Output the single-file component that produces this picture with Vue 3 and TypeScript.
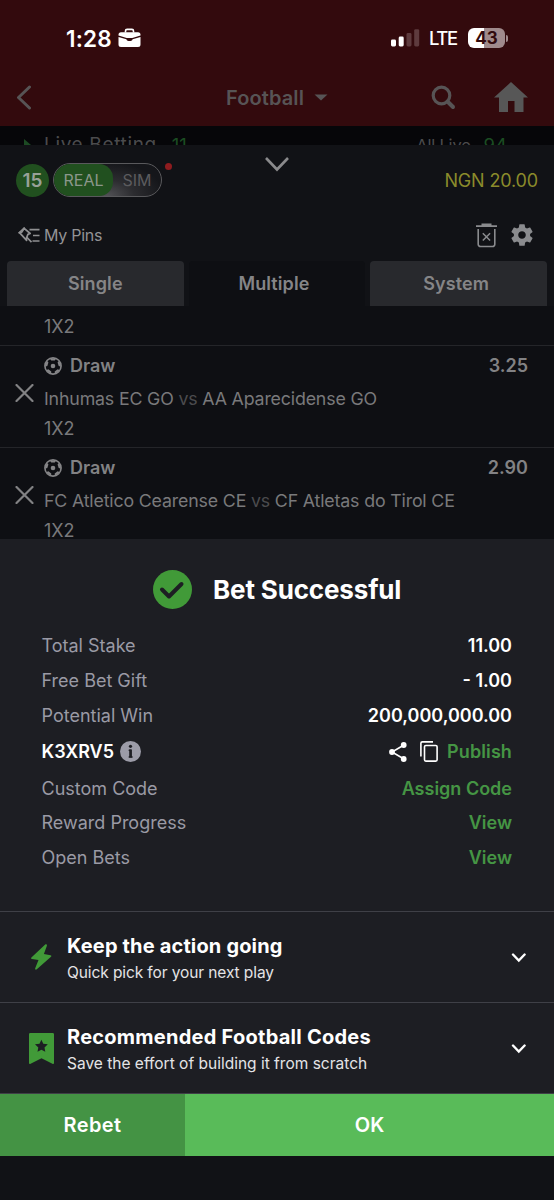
<script setup lang="ts">
interface Pick {
  outcome: string
  odds: string
  home: string
  away: string
  market: string
}

interface Detail {
  label: string
  value: string
  kind: 'amount' | 'code' | 'link'
}

const picks: Pick[] = [
  { outcome: 'Draw', odds: '3.25', home: 'Inhumas EC GO', away: 'AA Aparecidense GO', market: '1X2' },
  { outcome: 'Draw', odds: '2.90', home: 'FC Atletico Cearense CE', away: 'CF Atletas do Tirol CE', market: '1X2' },
]

const details: Detail[] = [
  { label: 'Total Stake', value: '11.00', kind: 'amount' },
  { label: 'Free Bet Gift', value: '- 1.00', kind: 'amount' },
  { label: 'Potential Win', value: '200,000,000.00', kind: 'amount' },
  { label: 'K3XRV5', value: 'Publish', kind: 'code' },
  { label: 'Custom Code', value: 'Assign Code', kind: 'link' },
  { label: 'Reward Progress', value: 'View', kind: 'link' },
  { label: 'Open Bets', value: 'View', kind: 'link' },
]

// Angles of the outer panels on the football icon.
const ballPanels: number[] = [0, 72, 144, 216, 288]
</script>

<template>
  <div class="screen">
    <header class="top">
      <div class="status">
        <span class="time">1:28</span>
        <svg class="case" width="23" height="20" viewBox="0 0 23 20">
          <path d="M7.500 4.500V3a1.600 1.600 0 0 1 1.600-1.600h4.800A1.600 1.600 0 0 1 15.500 3v1.500" fill="none" stroke="#fff" stroke-width="1.600" />
          <path d="M3 4.200h17a2.500 2.500 0 0 1 2.500 2.500v.9L14.300 10H8.700L.5 7.600V6.700A2.500 2.500 0 0 1 3 4.200z" fill="#fff" />
          <path d="M.5 8.900l7.900 2.400c.3 1.300 1.100 1.700 2 1.700h2.200c.9 0 1.700-.4 2-1.700l7.900-2.400v7.600a2.500 2.500 0 0 1-2.500 2.500H3a2.500 2.500 0 0 1-2.500-2.500z" fill="#fff" />
        </svg>
        <span class="grow"></span>
        <svg class="signal" width="29" height="18" viewBox="0 0 29 18">
          <rect x="0" y="10.500" width="5" height="7" rx="1.400" fill="#fff" />
          <rect x="7.700" y="7.500" width="5" height="10" rx="1.400" fill="#fff" />
          <rect x="15.500" y="4" width="5" height="13.500" rx="1.400" fill="#5e3b3e" />
          <rect x="23.200" y="0.200" width="5" height="17.300" rx="1.400" fill="#5e3b3e" />
        </svg>
        <span class="lte">LTE</span>
        <span class="battery">43</span>
        <span class="nub"></span>
      </div>
      <nav class="nav">
        <svg class="back" width="16" height="26" viewBox="0 0 16 26">
          <path d="M13.500 2L2.500 12.500l11 10.500" fill="none" stroke="#575455" stroke-width="3" stroke-linecap="round" stroke-linejoin="round" />
        </svg>
        <span class="sport">Football</span>
        <svg class="caret" width="14" height="7" viewBox="0 0 14 7"><path d="M.5.500h13L7 6.500z" fill="#575455" /></svg>
        <span class="grow"></span>
        <svg width="26" height="26" viewBox="0 0 26 26">
          <circle cx="10.500" cy="10.500" r="8.300" fill="none" stroke="#575455" stroke-width="3.200" />
          <path d="M16.500 16.500l5.500 5.500" stroke="#575455" stroke-width="4" stroke-linecap="round" />
        </svg>
        <svg class="home" width="34" height="30" viewBox="0 0 34 30">
          <path d="M17 0l17 15.500h-4.500V30h-9V19h-6.500v11H5V15.500H0z" fill="#575757" />
        </svg>
      </nav>
    </header>

    <div class="strip">
      <svg class="play" width="7" height="12" viewBox="0 0 7 12"><path d="M0 0l7 6-7 6z" fill="#1c4a23" /></svg>
      <span class="live">Live Betting</span>
      <span class="count">11</span>
      <span class="grow"></span>
      <span class="all">All Live</span>
      <span class="count right">94</span>
    </div>

    <section class="slip">
      <div class="account">
        <span class="badge">15</span>
        <div class="toggle">
          <span class="real">REAL</span>
          <span class="sim">SIM</span>
        </div>
        <span class="dot"></span>
        <svg class="collapse" width="26" height="16" viewBox="0 0 26 16">
          <path d="M2 2l11 11.500L24 2" fill="none" stroke="#8a8a8c" stroke-width="2.600" />
        </svg>
        <span class="grow"></span>
        <span class="balance">NGN 20.00</span>
      </div>

      <div class="pins">
        <svg width="22" height="17" viewBox="0 0 22 17">
          <path d="M6.200 1.300l6 5.200-2.300.9-1.400 3.600.1 2.300L1.500 5.600l2.300-.5z" fill="none" stroke="#8f8f91" stroke-width="1.700" stroke-linejoin="round" />
          <path d="M.6 6.300L6.700.6M8.500 10l5 5.200M11.500 2.700h10M15 8.500h6.500M14.500 14h7" fill="none" stroke="#8f8f91" stroke-width="1.700" />
        </svg>
        <span class="pins-label">My Pins</span>
        <span class="grow"></span>
        <svg width="21" height="25" viewBox="0 0 21 25">
          <path d="M0 3.100h21M5.500 1.500h10" stroke="#8a8b8e" stroke-width="1.800" />
          <path d="M2.200 6v15.200a2.300 2.300 0 0 0 2.300 2.300h12a2.300 2.300 0 0 0 2.300-2.300V6" fill="none" stroke="#8a8b8e" stroke-width="1.600" />
          <path d="M6.800 10.200l7.300 7.300m0-7.300l-7.300 7.300" stroke="#8a8b8e" stroke-width="1.500" />
        </svg>
        <svg class="gear" width="26" height="26" viewBox="0 0 24 24">
          <path fill="#8a8b8e" d="M19.430 12.980c.04-.32.07-.64.07-.98s-.03-.66-.07-.98l2.110-1.650c.19-.15.24-.42.12-.64l-2-3.460c-.12-.22-.39-.3-.61-.22l-2.490 1c-.52-.4-1.080-.73-1.690-.98l-.38-2.650C14.460 2.180 14.250 2 14 2h-4c-.25 0-.46.180-.49.420l-.38 2.650c-.61.25-1.170.59-1.690.98l-2.490-1c-.23-.09-.49 0-.61.220l-2 3.460c-.13.22-.07.49.12.640l2.110 1.650c-.04.32-.07.65-.07.98s.03.66.07.98l-2.110 1.650c-.19.15-.24.42-.12.640l2 3.460c.12.220.39.300.61.220l2.490-1c.52.400 1.080.730 1.690.980l.38 2.650c.03.240.24.420.49.420h4c.25 0 .46-.18.49-.42l.38-2.650c.61-.25 1.170-.59 1.690-.98l2.490 1c.23.090.49 0 .61-.22l2-3.460c.12-.22.07-.49-.12-.64l-2.110-1.650zM12 15.500c-1.930 0-3.500-1.570-3.500-3.500s1.570-3.500 3.500-3.500 3.500 1.570 3.500 3.500-1.570 3.500-3.500 3.500z" />
        </svg>
      </div>

      <div class="tabs">
        <span class="tab">Single</span>
        <span class="tab current">Multiple</span>
        <span class="tab shifted">System</span>
      </div>

      <div class="picks">
        <div class="tail">1X2</div>
        <article v-for="pick in picks" :key="pick.home" class="pick">
          <svg class="remove" width="19" height="18" viewBox="0 0 19 18">
            <path d="M1.500 1l16 16M17.500 1l-16 16" stroke="#828284" stroke-width="2.200" stroke-linecap="round" />
          </svg>
          <div class="pick-body">
            <div class="pick-head">
              <svg width="18" height="18" viewBox="0 0 18 18">
                <circle cx="9" cy="9" r="8.100" fill="none" stroke="#858587" stroke-width="1.600" />
                <circle cx="9" cy="9" r="2.300" fill="#858587" />
                <path v-for="angle in ballPanels" :key="angle" :transform="`rotate(${angle} 9 9)`" d="M5.800 1.400h6.400L10.800 3.600H7.200z" fill="#858587" />
              </svg>
              <span class="outcome">{{ pick.outcome }}</span>
              <span class="grow"></span>
              <span class="odds">{{ pick.odds }}</span>
            </div>
            <div class="teams">{{ pick.home }} <span class="vs">vs</span> {{ pick.away }}</div>
            <div class="market">{{ pick.market }}</div>
          </div>
        </article>
      </div>
    </section>

    <section class="result">
      <div class="result-title">
        <svg width="39" height="39" viewBox="0 0 39 39">
          <circle cx="19.500" cy="19.500" r="19.500" fill="#419a38" />
          <path d="M9 19.500l7 7L28.500 14" fill="none" stroke="#1d1e23" stroke-width="4" stroke-linecap="round" stroke-linejoin="round" />
        </svg>
        <h1>Bet Successful</h1>
      </div>

      <div class="details">
        <div v-for="row in details" :key="row.label" class="detail" :class="row.kind">
          <span class="label">{{ row.label }}</span>
          <svg v-if="row.kind === 'code'" class="info" width="21" height="21" viewBox="0 0 21 21">
            <circle cx="10.500" cy="10.500" r="10.500" fill="#9c9ca8" />
            <path d="M9.300 9.200h1.200v6.600M9.300 16h2.700" fill="none" stroke="#1d1e23" stroke-width="1.600" stroke-linecap="round" />
            <path d="M10.600 8.500v8" stroke="#1d1e23" stroke-width="2.600" />
            <circle cx="10.500" cy="5.300" r="1.600" fill="#1d1e23" />
          </svg>
          <span class="grow"></span>
          <template v-if="row.kind === 'code'">
            <svg class="share" width="18" height="20" viewBox="0 0 18 20">
              <path d="M15 3L3 10l12 7" fill="none" stroke="#fff" stroke-width="1.600" />
              <circle cx="14.700" cy="3" r="2.900" fill="#fff" />
              <circle cx="3" cy="10" r="2.900" fill="#fff" />
              <circle cx="14.700" cy="17" r="2.900" fill="#fff" />
            </svg>
            <svg class="copy" width="18" height="21" viewBox="0 0 18 21">
              <path d="M.9 15.500V2.300A1.400 1.400 0 0 1 2.300.9H13" fill="none" stroke="#fff" stroke-width="1.600" />
              <rect x="4.500" y="4.500" width="12.600" height="15.600" rx="1.300" fill="none" stroke="#fff" stroke-width="1.600" />
            </svg>
          </template>
          <span class="value">{{ row.value }}</span>
        </div>
      </div>

      <div class="promo">
        <svg class="promo-icon" width="28" height="32" viewBox="0 0 28 32">
          <path d="M17.200 2.500L3.400 15.400c-.6.600-.3 1.400.5 1.500l6.600 1L7.200 26.200c-.4 1.300.7 1.900 1.600 1.100l14.200-12.500c.7-.6.400-1.500-.5-1.600l-6.600-1.100 3-8.300c.4-1.300-.8-2.100-1.700-1.300z" fill="#419a38" />
        </svg>
        <div class="promo-text">
          <h2 class="keep">Keep the action going</h2>
          <p class="quick">Quick pick for your next play</p>
        </div>
        <span class="grow"></span>
        <svg width="15" height="10" viewBox="0 0 15 10"><path d="M2 1.500l5.800 6 5.800-6" fill="none" stroke="#fff" stroke-width="2.400" stroke-linecap="round" /></svg>
      </div>
      <div class="promo">
        <svg class="promo-icon" width="28" height="32" viewBox="0 0 28 32">
          <path d="M2.300 0h22.400A1.300 1.300 0 0 1 26 1.300v28.600c0 1-.7 1.300-1.600.8L13.500 25.300 2.600 30.700c-.9.500-1.600.2-1.600-.8V1.300A1.300 1.300 0 0 1 2.300 0z" fill="#419a38" />
          <path d="M13.400 6.700l1.900 4 4.500.6-3.300 3.100.8 4.400-3.900-2.100-3.900 2.100.8-4.400L7 11.300l4.500-.6z" fill="#1d1e23" />
        </svg>
        <div class="promo-text">
          <h2 class="codes">Recommended Football Codes</h2>
          <p class="save">Save the effort of building it from scratch</p>
        </div>
        <span class="grow"></span>
        <svg width="15" height="10" viewBox="0 0 15 10"><path d="M2 1.500l5.800 6 5.800-6" fill="none" stroke="#fff" stroke-width="2.400" stroke-linecap="round" /></svg>
      </div>
    </section>

    <footer class="actions">
      <button class="rebet" type="button">Rebet</button>
      <button class="ok" type="button">OK</button>
    </footer>
  </div>
</template>

<style>
body {
  margin: 0;
  background: #111216;
}
</style>

<style scoped>
.screen {
  width: 554px;
  height: 1200px;
  overflow: hidden;
  background: #111216;
  font-family: Inter, "Liberation Sans", sans-serif;
  font-size: 18px;
  color: #fff;
  white-space: nowrap;
}
.screen svg {
  flex: none;
  display: block;
}
.grow {
  flex: 1;
}
h1,
h2,
p {
  margin: 0;
}
.top {
  height: 126px;
  background: #330a0d;
}
.status {
  box-sizing: border-box;
  height: 70px;
  padding: 6px 46px 0 66px;
  display: flex;
  align-items: center;
}
.time {
  width: 52px;
  font-size: 22.5px;
  font-weight: 600;
  letter-spacing: 0.2px;
}
.lte {
  width: 39px;
  margin-left: 9px;
  font-size: 18.5px;
  font-weight: 500;
  letter-spacing: -1.4px;
}
.battery {
  width: 37px;
  height: 20px;
  border-radius: 6px;
  background: linear-gradient(90deg, #fff 43%, #a08a8c 43%);
  color: #330a0d;
  font-size: 17px;
  font-weight: 700;
  line-height: 20px;
  text-align: center;
}
.nub {
  width: 2px;
  height: 7px;
  margin-left: 1px;
  border-radius: 0 3px 3px 0;
  background: #a08a8c;
}
.nav {
  height: 55px;
  padding: 0 26px 0 16px;
  display: flex;
  align-items: center;
}
.sport {
  margin-left: 194px;
  font-size: 20px;
  font-weight: 600;
  letter-spacing: 0.1px;
  color: #575455;
}
.caret {
  margin-left: 10px;
}
.home {
  margin: -1px 0 0 37px;
}
.strip {
  height: 19px;
  padding: 0 47px 0 24px;
  display: flex;
  align-items: flex-start;
  overflow: hidden;
  background: #060609;
  color: #4b4b4d;
  line-height: 38px;
}
.play {
  margin-top: 13px;
}
.live {
  margin-left: 13px;
  font-size: 19px;
  letter-spacing: 0.65px;
}
.count {
  margin-left: 15px;
  color: #1b4c22;
  font-size: 18.5px;
}
.count.right {
  margin-left: 13px;
}
.all {
  font-size: 16.5px;
  letter-spacing: -0.2px;
}
.slip {
  height: 394px;
  overflow: hidden;
  background: #111216;
}
.account {
  position: relative;
  height: 70px;
  padding: 0 16px;
  display: flex;
  align-items: center;
}
.badge {
  width: 33px;
  height: 33px;
  border-radius: 50%;
  background: #21501f;
  color: #98a198;
  font-size: 19px;
  font-weight: 600;
  line-height: 34px;
  text-align: center;
}
.toggle {
  box-sizing: border-box;
  width: 109px;
  height: 34px;
  margin-left: 4px;
  border: 1px solid #59595c;
  border-radius: 17px;
  overflow: hidden;
  display: flex;
  line-height: 33px;
  font-size: 16px;
  text-align: center;
  background: radial-gradient(ellipse at 50% 100%, #515155 0%, #2c2c30 35%, #15161a 75%);
}
.real {
  width: 59px;
  border-radius: 0 14px 14px 0;
  background: #21501f;
  color: #8b978b;
}
.sim {
  flex: 1;
  color: #5b5b5e;
}
.dot {
  align-self: flex-start;
  width: 7px;
  height: 7px;
  margin: 18px 0 0 3px;
  border-radius: 50%;
  background: #8e1c1f;
}
.collapse {
  position: absolute;
  left: 264px;
  top: 11px;
}
.balance {
  color: #8b8b2b;
  letter-spacing: -0.15px;
}
.pins {
  height: 40px;
  padding: 0 19px 6px 18px;
  display: flex;
  align-items: center;
}
.pins-label {
  margin-left: 4px;
  font-size: 16px;
  letter-spacing: -0.25px;
  color: #939395;
}
.gear {
  margin-left: 12px;
}
.tabs {
  height: 45px;
  padding: 0 7px;
  display: grid;
  grid-template-columns: repeat(3, 1fr);
  gap: 5px;
}
.tab {
  border-radius: 4px 4px 0 0;
  background: #28292d;
  color: #858587;
  font-weight: 600;
  letter-spacing: 0.1px;
  line-height: 45px;
  text-align: center;
}
.tab.current {
  padding-right: 6px;
  background: #0e0f13;
}
.tab.shifted {
  padding-right: 5px;
}
.picks {
  box-sizing: border-box;
  height: 233px;
  overflow: hidden;
  background: #0e0f13;
  color: #79797b;
}
.tail {
  height: 28px;
  padding: 7px 0 4px 44px;
  border-bottom: 1px solid #242529;
  line-height: 28px;
}
.pick {
  box-sizing: border-box;
  height: 102px;
  padding: 4px 26px 0 15px;
  border-bottom: 1px solid #242529;
  display: flex;
}
.remove {
  margin: 34px 10px 0 0;
}
.pick-body {
  flex: 1;
}
.pick-head {
  height: 31px;
  display: flex;
  align-items: center;
  font-weight: 600;
}
.outcome {
  margin-left: 8px;
}
.outcome,
.odds {
  color: #828284;
}
.teams {
  height: 34px;
  line-height: 35px;
  font-size: 17.8px;
  letter-spacing: -0.17px;
}
.vs {
  color: #4b4b4e;
}
.market {
  line-height: 28px;
}
.result {
  height: 554px;
  background: #1d1e23;
  border-bottom: 1px solid #3f4047;
}
.result-title {
  box-sizing: border-box;
  height: 89px;
  padding: 12px 0 0 153px;
  display: flex;
  align-items: center;
  gap: 21px;
}
h1 {
  font-size: 26px;
  font-weight: 700;
  letter-spacing: -0.15px;
}
.details {
  box-sizing: border-box;
  height: 283px;
  padding: 0.4px 42px 0 41.5px;
}
.detail {
  height: 34.8px;
  display: flex;
  align-items: center;
}
.detail.code {
  height: 38px;
}
.label {
  color: #9a9aa5;
}
.value {
  font-weight: 600;
}
.code .label {
  color: #fff;
  font-weight: 600;
}
.code .value,
.link .value {
  color: #459544;
}
.code .value {
  letter-spacing: 0.1px;
}
.info {
  margin-left: 6px;
}
.copy {
  margin: 0 9px 0 13px;
}
.promo {
  box-sizing: border-box;
  height: 91px;
  padding: 2px 28px 0 28px;
  border-top: 1px solid #3f4047;
  display: flex;
  align-items: center;
}
.promo-text {
  margin-left: 11px;
}
h2 {
  font-size: 20px;
  font-weight: 700;
  line-height: 28px;
}
.keep {
  letter-spacing: 0.16px;
}
.codes {
  letter-spacing: 0.25px;
}
p {
  font-size: 15.5px;
  line-height: 25px;
  color: #e4e4e6;
}
.quick {
  letter-spacing: -0.1px;
}
.actions {
  height: 62px;
  display: flex;
}
.actions button {
  padding: 0;
  border: 0;
  color: #fff;
  font: 600 20px Inter, "Liberation Sans", sans-serif;
}
.rebet {
  width: 185px;
  letter-spacing: 0.4px;
  background: #449344;
}
.ok {
  flex: 1;
  background: #59bb59;
}
</style>
